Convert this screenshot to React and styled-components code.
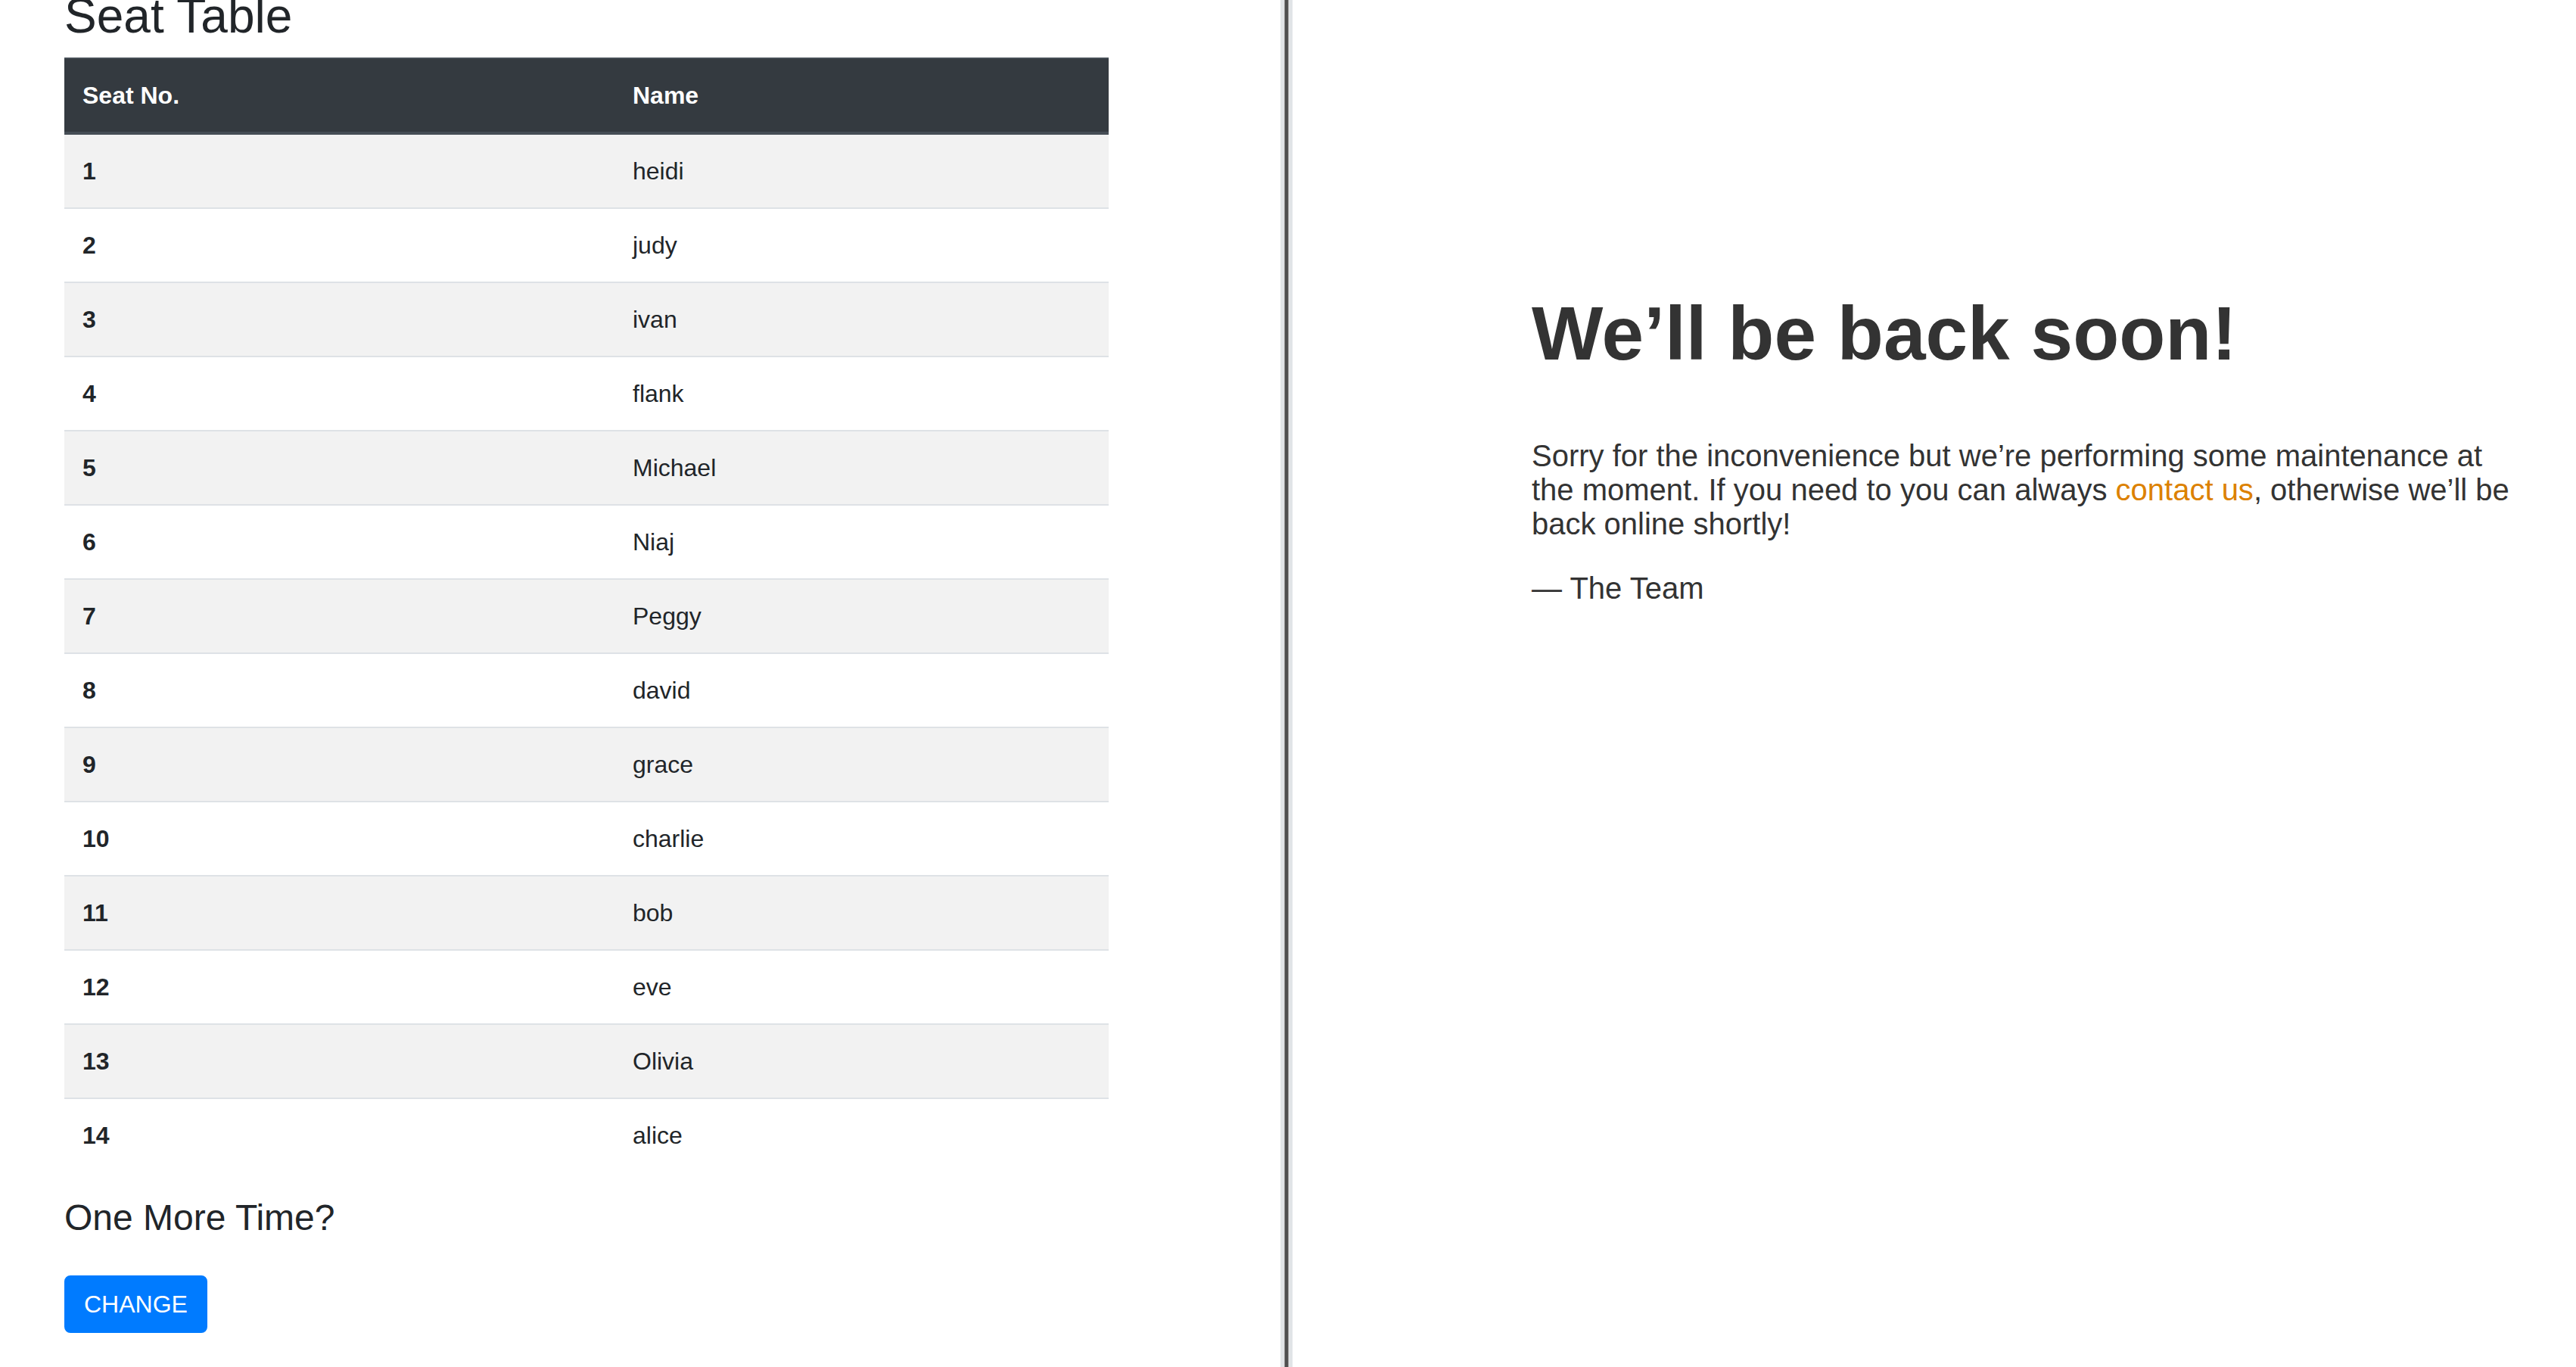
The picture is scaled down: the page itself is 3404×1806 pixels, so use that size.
import React from "react"
import styled, {createGlobalStyle} from "styled-components"

const seats = [
    "heidi", "judy", "ivan", "flank", "Michael", "Niaj", "Peggy",
    "david", "grace", "charlie", "bob", "eve", "Olivia", "alice"
];

const GlobalStyle = createGlobalStyle`
    html, body {
        margin: 0;
        padding: 0;
        background: #fff;
        overflow: hidden;
    }
`

function SeatPane() {
    return (
        <LeftPane>
            <Container>
                <Title>Seat Table</Title>
                <SeatTable>
                    <thead>
                        <tr>
                            <HeadCell>Seat No.</HeadCell>
                            <HeadCell>Name</HeadCell>
                        </tr>
                    </thead>
                    <tbody>
                        {seats.map((name, i) => (
                            <Row key={i}>
                                <RowHead scope="row">{i + 1}</RowHead>
                                <Cell>{name}</Cell>
                            </Row>
                        ))}
                    </tbody>
                </SeatTable>
                <SubTitle>One More Time?</SubTitle>
                <Actions>
                    <PrimaryButton type="button">CHANGE</PrimaryButton>
                </Actions>
            </Container>
        </LeftPane>
    )
}

function MaintenancePane() {
    return (
        <RightPane>
            <Article>
                <Headline>We&rsquo;ll be back soon!</Headline>
                <div>
                    <Para>
                        Sorry for the inconvenience but we&rsquo;re performing some maintenance at the moment.
                        If you need to you can always <ContactLink href="#">contact us</ContactLink>, otherwise
                        we&rsquo;ll be back online shortly!
                    </Para>
                    <Para>&mdash; The Team</Para>
                </div>
            </Article>
        </RightPane>
    )
}

export default function App() {
    return (
        <>
            <GlobalStyle/>
            <Page>
                <SeatPane/>
                <Divider/>
                <MaintenancePane/>
            </Page>
        </>
    )
}

const Page = styled.div`
    display: flex;
    width: 100vw;
    height: 100vh;
    overflow: hidden;
`

const LeftPane = styled.section`
    width: 1692px;
    flex-shrink: 0;
    overflow: hidden;
    font-family: "Liberation Sans", Arial, sans-serif;
    font-size: 32px;
    line-height: 1.5;
    color: #212529;
`

const Container = styled.div`
    width: 1380px;
    padding-left: 85px;
    margin-top: -17px;
`

const Title = styled.h2`
    font-size: 64px;
    font-weight: 500;
    line-height: 1.2;
    margin: 0 0 16px;
`

const SeatTable = styled.table`
    width: 100%;
    border-collapse: collapse;
    margin-bottom: 32px;
`

const HeadCell = styled.th`
    padding: 24px;
    text-align: left;
    vertical-align: bottom;
    font-weight: 700;
    color: #fff;
    background: #343a40;
    border-top: 2px solid #454d55;
    border-bottom: 4px solid #454d55;

    &:first-child {
        width: 727px;
        box-sizing: border-box;
    }
`

const Row = styled.tr`
    &:nth-of-type(odd) {
        background: #f2f2f2;
    }
`

const RowHead = styled.th`
    padding: 24px;
    text-align: left;
    vertical-align: top;
    font-weight: 700;
    border-top: 2px solid #dee2e6;
`

const Cell = styled.td`
    padding: 24px;
    vertical-align: top;
    border-top: 2px solid #dee2e6;
`

const SubTitle = styled.h4`
    font-size: 48px;
    font-weight: 500;
    line-height: 1.2;
    margin: 0 0 16px;
`

const Actions = styled.div`
    padding-top: 32px;
`

const PrimaryButton = styled.button`
    display: inline-block;
    font-family: "Liberation Sans", Arial, sans-serif;
    font-size: 32px;
    line-height: 48px;
    padding: 12px 24px;
    color: #fff;
    background: #007bff;
    border: 2px solid #007bff;
    border-radius: 8px;
    cursor: pointer;
`

const Divider = styled.div`
    width: 16px;
    flex-shrink: 0;
    background: linear-gradient(to right,
        #e1e4e7 0 5px,
        #9a9a9a 5px 6px,
        #4f4f4f 6px 10px,
        #9a9a9a 10px 11px,
        #e1e4e7 11px 16px);
`

const RightPane = styled.section`
    flex: 1;
    min-width: 0;
    overflow: hidden;
    padding: 316px;
    font-family: "Liberation Sans", Helvetica, sans-serif;
    font-size: 40px;
    color: #333;
`

const Article = styled.article`
    display: block;
    width: 1300px;
    text-align: left;
`

const Headline = styled.h1`
    font-size: 100px;
    font-weight: 700;
    margin: 67px 0 82px;
`

const Para = styled.p`
    margin: 40px 0;
`

const ContactLink = styled.a`
    color: #dc8100;
    text-decoration: none;
`
